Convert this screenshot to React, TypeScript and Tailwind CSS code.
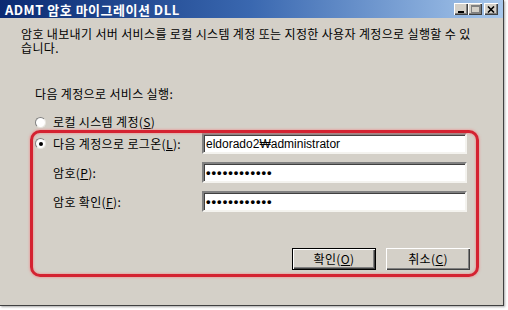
import { ReactNode } from "react";

function Mn({ children }: { children: ReactNode }) {
  return <span className="underline underline-offset-[1px]">{children}</span>;
}

function TitleButton({ children }: { children: ReactNode }) {
  return (
    <div className="w-[14px] h-[12px] bg-[#d4d0c8] flex items-center justify-center shadow-[inset_1px_1px_0_#fff,inset_-1px_-1px_0_#404040,inset_-2px_-2px_0_#808080]">
      {children}
    </div>
  );
}

function Radio({ checked }: { checked?: boolean }) {
  return (
    <div className="w-[11px] h-[11px] rounded-full bg-white border border-t-[#808080] border-l-[#808080] border-b-[#e8e6e0] border-r-[#e8e6e0] flex items-center justify-center shrink-0">
      {checked && <div className="w-[4px] h-[4px] rounded-full bg-black" />}
    </div>
  );
}

function Field({ children }: { children?: ReactNode }) {
  return (
    <div className="w-[265px] h-[21px] bg-white border-2 border-t-[#808080] border-l-[#808080] border-b-[#f4f3ef] border-r-[#f4f3ef] shadow-[inset_1px_1px_0_#404040] flex items-center pl-[2px] overflow-hidden">
      {children}
    </div>
  );
}

function Dots() {
  return (
    <span className="font-['Liberation_Sans',sans-serif] text-[13px] font-bold tracking-[1px] leading-none text-black">
      ••••••••••••
    </span>
  );
}

function Button({ label, isDefault }: { label: ReactNode; isDefault?: boolean }) {
  return (
    <button
      className={
        isDefault
          ? "w-[84px] h-[22px] bg-[#d4d0c8] border border-black text-[12px] tracking-[0.35px] text-black shadow-[inset_1px_1px_0_#fff,inset_-1px_-1px_0_#404040,inset_-2px_-2px_0_#808080]"
          : "w-[84px] h-[22px] bg-[#d4d0c8] text-[12px] tracking-[0.35px] text-black shadow-[inset_1px_1px_0_#fff,inset_-1px_-1px_0_#404040,inset_-2px_-2px_0_#808080]"
      }
    >
      {label}
    </button>
  );
}

export default function App() {
  return (
    <div className="w-[508px] h-[310px] bg-white font-['Noto_Sans_CJK_KR','Liberation_Sans',sans-serif] text-black">
      <div className="relative w-[504px] h-[306px] bg-[#d4d0c8] flex flex-col border-r border-b border-[#404040] shadow-[1px_1px_2px_rgba(0,0,0,0.35)]">
        <div className="h-[18px] shrink-0 flex items-center justify-between pl-[5px] pr-[5px] bg-gradient-to-r from-[#0b2a72] via-[#3a68b0] to-[#a8c8ec]">
          <span className="text-white font-bold text-[13px] leading-none tracking-[0.5px]">
            ADMT 암호 마이그레이션 DLL
          </span>
          <div className="flex items-center">
            <TitleButton>
              <div className="w-[6px] h-[2px] bg-black mt-[5px]" />
            </TitleButton>
            <TitleButton>
              <div className="w-[9px] h-[8px] border border-[#808080] border-t-2" />
            </TitleButton>
            <div className="w-[2px]" />
            <TitleButton>
              <svg width="8" height="7" viewBox="0 0 8 7">
                <path d="M1 0.5 L7 6.5 M7 0.5 L1 6.5" stroke="#000" strokeWidth="1.6" />
              </svg>
            </TitleButton>
          </div>
        </div>

        <div className="flex flex-col text-[12px] leading-[12px] tracking-[0.35px]">
          <div className="mt-[9px] ml-[21px] whitespace-nowrap leading-[14px]">
            <div>암호 내보내기 서버 서비스를 로컬 시스템 계정 또는 지정한 사용자 계정으로 실행할 수 있</div>
            <div>습니다.</div>
          </div>

          <div className="mt-[33px] ml-[35px]">다음 계정으로 서비스 실행:</div>

          <div className="mt-[15px] h-[14px] flex items-center pl-[35px]">
            <Radio />
            <span className="ml-[7px]">
              로컬 시스템 계정(<Mn>S</Mn>)
            </span>
          </div>

          <div className="mt-[4px] h-[21px] flex items-center">
            <div className="w-[202px] shrink-0 flex items-center pl-[35px]">
              <Radio checked />
              <span className="ml-[7px]">
                다음 계정으로 로그온(<Mn>L</Mn>):
              </span>
            </div>
            <Field>
              <span className="font-['Liberation_Sans',sans-serif] text-[12px] leading-none tracking-normal">
                eldorado2₩administrator
              </span>
            </Field>
          </div>

          <div className="mt-[8px] h-[21px] flex items-center">
            <div className="w-[202px] shrink-0 pl-[53px]">
              암호(<Mn>P</Mn>):
            </div>
            <Field>
              <Dots />
            </Field>
          </div>

          <div className="mt-[8px] h-[21px] flex items-center">
            <div className="w-[202px] shrink-0 pl-[53px]">
              암호 확인(<Mn>F</Mn>):
            </div>
            <Field>
              <Dots />
            </Field>
          </div>

          <div className="mt-[36px] flex justify-end gap-[10px] pr-[33px]">
            <Button isDefault label={<>확인(<Mn>O</Mn>)</>} />
            <Button label={<>취소(<Mn>C</Mn>)</>} />
          </div>
        </div>

        <div className="absolute left-[30px] top-[130px] w-[449px] h-[147px] rounded-[10px] border-[3px] border-[#d42231] shadow-[0_0_2px_1px_rgba(240,140,140,0.55),inset_0_0_2px_1px_rgba(240,140,140,0.55)] pointer-events-none" />
      </div>
    </div>
  );
}
